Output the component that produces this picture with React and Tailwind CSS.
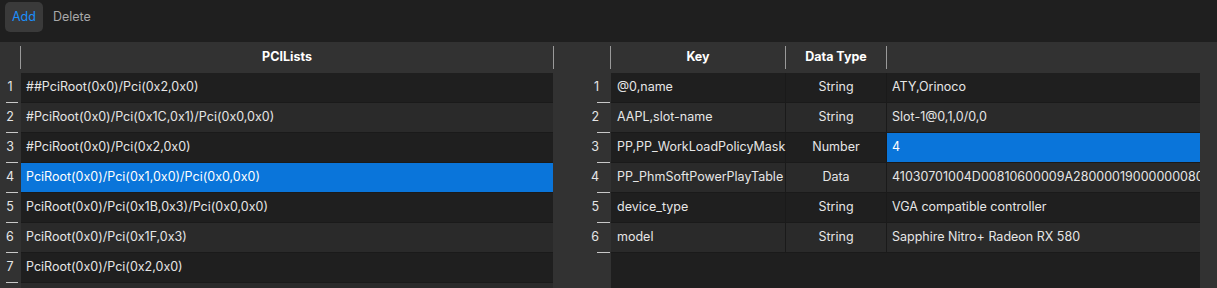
const pciRows = [
  "##PciRoot(0x0)/Pci(0x2,0x0)",
  "#PciRoot(0x0)/Pci(0x1C,0x1)/Pci(0x0,0x0)",
  "#PciRoot(0x0)/Pci(0x2,0x0)",
  "PciRoot(0x0)/Pci(0x1,0x0)/Pci(0x0,0x0)",
  "PciRoot(0x0)/Pci(0x1B,0x3)/Pci(0x0,0x0)",
  "PciRoot(0x0)/Pci(0x1F,0x3)",
  "PciRoot(0x0)/Pci(0x2,0x0)",
];

const props = [
  ["@0,name", "String", "ATY,Orinoco"],
  ["AAPL,slot-name", "String", "Slot-1@0,1,0/0,0"],
  ["PP,PP_WorkLoadPolicyMask", "Number", "4"],
  ["PP_PhmSoftPowerPlayTable", "Data", "41030701004D00810600009A280000190000000800000000000000"],
  ["device_type", "String", "VGA compatible controller"],
  ["model", "String", "Sapphire Nitro+ Radeon RX 580"],
];

function Tick({ className }) {
  return <div className={"h-px shrink-0 bg-[#c8c8c8] " + className} />;
}

function HeaderLine() {
  return <div className="my-[4px] w-px self-stretch bg-[#9a9a9a]" />;
}

export default function App() {
  return (
    <div className="h-[288px] w-[1217px] overflow-hidden bg-[#323232] font-['Inter','Noto_Sans',sans-serif] text-[12.5px] text-[#e6e6e6]">
      <div className="flex h-[42px] items-start gap-[10px] bg-[#1f1f1f] px-[5px] pt-[2px]">
        <button className="h-[30px] rounded-[5px] bg-[#3a3a3a] px-[7px] text-[12.5px] text-[#1b8ffc]">Add</button>
        <button className="h-[30px] text-[12.5px] text-[#a8a8a8]">Delete</button>
      </div>
      <div className="flex h-[246px]">
        <div className="flex w-[554px] flex-col">
          <div className="flex h-[31px] shrink-0">
            <div className="w-[20px]" />
            <HeaderLine />
            <div className="flex flex-1 items-center justify-center font-bold text-white">PCILists</div>
            <HeaderLine />
          </div>
          {pciRows.concat([""]).map((row, i) => (
            <div key={i} className="flex h-[30px] shrink-0">
              <div className="flex w-[21px] flex-col">
                <div className="flex flex-1 items-center justify-center pr-px text-[#e6e6e6]">{row ? i + 1 : ""}</div>
                {row && <Tick className="ml-[6px] w-[12px]" />}
              </div>
              <div
                className={
                  "flex flex-1 items-center border-b border-[#1a1a1a] pl-[5px] " +
                  (i === 3 ? "bg-[#0a75da] text-white" : i % 2 === 0 ? "bg-[#1f1f1f]" : "bg-[#2a2a2a]")
                }
              >
                {row}
              </div>
              <div className="w-px" />
            </div>
          ))}
        </div>
        <div className="flex flex-1 flex-col">
          <div className="flex h-[31px] shrink-0">
            <div className="w-[56px]" />
            <HeaderLine />
            <div className="flex w-[174px] items-center justify-center font-bold text-white">Key</div>
            <HeaderLine />
            <div className="flex w-[100px] items-center justify-center font-bold text-white">Data Type</div>
            <HeaderLine />
            <div className="flex-1" />
          </div>
          <div className="flex flex-1">
            <div className="flex w-[57px] flex-col">
              {props.map((p, i) => (
                <div key={i} className="flex h-[30px] shrink-0 flex-col">
                  <div className="flex flex-1 items-center justify-end pr-[12px]">{i + 1}</div>
                  <Tick className="ml-[43px] w-[13px]" />
                </div>
              ))}
            </div>
            <div className="flex w-[589px] flex-col bg-[#1f1f1f]">
              {props.map(([key, type, value], i) => (
                <div
                  key={i}
                  className={"flex h-[30px] shrink-0 border-b border-[#1a1a1a] " + (i % 2 === 0 ? "bg-[#1f1f1f]" : "bg-[#2a2a2a]")}
                >
                  <div className="flex w-[175px] items-center border-r border-[#1a1a1a] pl-[6px]">{key}</div>
                  <div className="flex w-[101px] items-center justify-center border-r border-[#1a1a1a]">{type}</div>
                  <div
                    className={
                      "flex flex-1 items-center overflow-hidden whitespace-nowrap pl-[5px] " +
                      (i === 2 ? "bg-[#0a75da] text-white" : "")
                    }
                  >
                    {value}
                  </div>
                </div>
              ))}
            </div>
            <div className="flex-1" />
          </div>
        </div>
      </div>
    </div>
  );
}
